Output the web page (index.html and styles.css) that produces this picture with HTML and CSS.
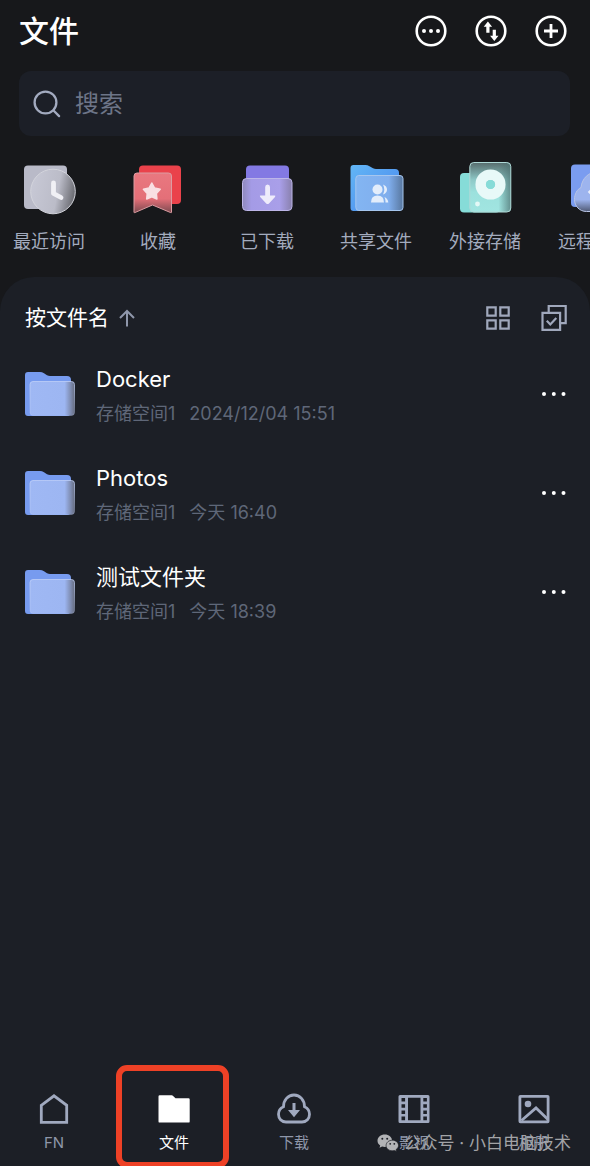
FILE: index.html
```html
<!DOCTYPE html>
<html lang="zh-CN">
<head>
<meta charset="utf-8">
<meta name="viewport" content="width=device-width, initial-scale=1">
<title>文件</title>
<link rel="stylesheet" href="styles.css">
</head>
<body>
<svg class="defs" width="0" height="0" aria-hidden="true">
  <defs>
    <linearGradient id="folder-front" x1="0" y1="0" x2="1" y2="0">
      <stop offset="0" stop-color="#9fb8f4"/><stop offset=".78" stop-color="#9db6f2"/><stop offset=".9" stop-color="#8291b8"/><stop offset="1" stop-color="#686f83"/>
    </linearGradient>
    <linearGradient id="folder-edge" x1="0" y1="0" x2="0" y2="1">
      <stop offset="0" stop-color="#c3d2f8" stop-opacity=".75"/><stop offset="1" stop-color="#c3d2f8" stop-opacity=".25"/>
    </linearGradient>
    <linearGradient id="clock-face" x1="0" y1=".4" x2="1" y2=".6">
      <stop offset="0" stop-color="#c7c8d5"/><stop offset=".6" stop-color="#bbbcc8"/><stop offset="1" stop-color="#66676d"/>
    </linearGradient>
    <linearGradient id="mark-face" x1="0" y1="0" x2="0" y2="1">
      <stop offset="0" stop-color="#e97880"/><stop offset=".65" stop-color="#e46f78"/><stop offset="1" stop-color="#7c4a50"/>
    </linearGradient>
    <linearGradient id="box-face" x1="0" y1="0" x2="1" y2="0">
      <stop offset="0" stop-color="#8f89bd"/><stop offset=".18" stop-color="#a49be6"/><stop offset=".75" stop-color="#a99fe9"/><stop offset="1" stop-color="#8980ad"/>
    </linearGradient>
    <linearGradient id="share-back" x1="0" y1="0" x2="1" y2="1">
      <stop offset="0" stop-color="#62b6f6"/><stop offset="1" stop-color="#4a86ec"/>
    </linearGradient>
    <linearGradient id="share-face" x1="0" y1="0" x2="1" y2="0">
      <stop offset="0" stop-color="#83b5f2"/><stop offset=".7" stop-color="#80aeed"/><stop offset="1" stop-color="#58779f"/>
    </linearGradient>
    <linearGradient id="disk-face" x1="0" y1="0" x2="0" y2="1">
      <stop offset="0" stop-color="#576c6d"/><stop offset=".35" stop-color="#8ec9c7"/><stop offset=".6" stop-color="#9ce1dd"/><stop offset="1" stop-color="#a1e5e1"/>
    </linearGradient>
    <linearGradient id="disk-shade" x1="0" y1="0" x2="1" y2="0">
      <stop offset=".7" stop-color="#4e7272" stop-opacity="0"/><stop offset="1" stop-color="#4e7272" stop-opacity=".75"/>
    </linearGradient>
    <linearGradient id="cloud-face" x1="0" y1="0" x2="0" y2="1">
      <stop offset=".7" stop-color="#9db4ee"/><stop offset="1" stop-color="#505a75"/>
    </linearGradient>
    <symbol id="folder" viewBox="0 0 50 44">
      <path d="M0 3q0-3 3-3h12q2 0 4 1.200l3 2q1.500.8 3 .8h17q4 0 4 4v32q0 4-4 4H3q-3 0-3-3z" fill="#779bef"/>
      <rect x="5" y="9.500" width="44.500" height="34" rx="3" fill="url(#folder-front)" stroke="url(#folder-edge)"/>
    </symbol>
    <symbol id="dots" viewBox="0 0 26 6">
      <g fill="#fff"><circle cx="3" cy="3" r="2"/><circle cx="12.800" cy="3" r="2"/><circle cx="22.500" cy="3" r="2"/></g>
    </symbol>
  </defs>
</svg>

<header class="topbar">
  <h1 class="topbar-title">文件</h1>
  <div class="topbar-actions">
    <button class="icon-button" type="button" aria-label="更多">
      <svg width="32" height="32" viewBox="0 0 32 32"><circle cx="16" cy="16" r="14.300" fill="none" stroke="#fff" stroke-width="2.600"/><g fill="#fff"><circle cx="9" cy="16" r="2"/><circle cx="16" cy="16" r="2"/><circle cx="23" cy="16" r="2"/></g></svg>
    </button>
    <button class="icon-button" type="button" aria-label="传输列表">
      <svg width="32" height="32" viewBox="0 0 32 32"><circle cx="16" cy="16" r="14.300" fill="none" stroke="#fff" stroke-width="2.600"/><path d="M12.900 6.500l4.200 5.300h-2.600v6h-3.200v-6H8.700zM19.300 26l-4.200-5.300h2.600v-6h3.200v6h2.600z" fill="#fff"/></svg>
    </button>
    <button class="icon-button" type="button" aria-label="新建">
      <svg width="32" height="32" viewBox="0 0 32 32"><circle cx="16" cy="16" r="14.300" fill="none" stroke="#fff" stroke-width="2.600"/><path d="M16 9v14M9 16h14" stroke="#fff" stroke-width="2.800"/></svg>
    </button>
  </div>
</header>

<form class="search" role="search">
  <label class="search-label" for="q" aria-label="搜索">
    <svg width="28" height="28" viewBox="0 0 28 28" fill="none" stroke="#a3abc0" stroke-width="2.300" stroke-linecap="round"><circle cx="12.500" cy="12.500" r="10.900"/><path d="M20.500 20.500l5.600 5.600"/></svg>
  </label>
  <input class="search-input" id="q" type="text" placeholder="搜索">
</form>

<nav class="shortcuts" aria-label="快捷入口">
  <a class="shortcut" href="#recent">
    <svg class="shortcut-icon" viewBox="0 0 60 60"><rect x="5" y="7.500" width="43" height="43.500" rx="4" fill="#b9bac8"/><circle cx="34" cy="33.500" r="22.300" fill="url(#clock-face)" stroke="#d3d4dc"/><path d="M34.500 25v10.500l7.500 4" fill="none" stroke="#f0f0f5" stroke-width="4.800" stroke-linecap="round" stroke-linejoin="round"/></svg>
    <span>最近访问</span>
  </a>
  <a class="shortcut" href="#favorites">
    <svg class="shortcut-icon" viewBox="0 0 60 60"><rect x="11" y="7.500" width="42" height="38.500" rx="4" fill="#ea424b"/><path d="M6 18q0-3 3-3h31.500q3 0 3 3v36.200q0 .8-.8.400L24.500 47 6.800 54.600q-.8.400-.8-.4z" fill="url(#mark-face)" stroke="#dc9ca2"/><path d="M23.800 25l2.800 5 5.600 1.200-3.800 4.300.5 5.500-5.100-2.200-5.100 2.200.5-5.500-3.800-4.300 5.600-1.200z" fill="#f9dfe3" stroke="#f9dfe3" stroke-width="1.500" stroke-linejoin="round"/></svg>
    <span>收藏</span>
  </a>
  <a class="shortcut" href="#downloaded">
    <svg class="shortcut-icon" viewBox="0 0 60 60"><rect x="9" y="7.500" width="43" height="30" rx="4" fill="#8379e3"/><rect x="5.500" y="20.500" width="49.500" height="32" rx="4" fill="url(#box-face)" stroke="#bdb6e8"/><path d="M28.200 29q0-2.500 2.400-2.500T33 29v8.500h4.500q1.500 0 .5 1.400l-6 6.500q-1.400 1.300-2.800 0l-6-6.500q-1-1.400.5-1.400h4.500z" fill="#eeebfb"/></svg>
    <span>已下载</span>
  </a>
  <a class="shortcut" href="#shared">
    <svg class="shortcut-icon" viewBox="0 0 60 60"><path d="M4.500 10q0-3 3-3h12q2 0 4 1.300l3.500 2q1.500.8 3 .8H49q4 0 4 4V49q0 4-4 4H7.500q-3 0-3-3z" fill="url(#share-back)"/><rect x="9.800" y="17.500" width="47.200" height="35" rx="3" fill="url(#share-face)" stroke="#a6c6ee"/><g fill="#e3edfb"><circle cx="31.500" cy="31.500" r="5"/><path d="M25 44.500q0-7 6.500-7t6.500 7z"/><path d="M37 26.500q4 1.500 4 5t-4 5q2.500-5 0-10zM38.500 39q3.500 1.500 3.800 5.500h-2.800q0-3-1-5.500z"/></g></svg>
    <span>共享文件</span>
  </a>
  <a class="shortcut" href="#external">
    <svg class="shortcut-icon" viewBox="0 0 60 60"><rect x="5" y="15" width="40" height="39.500" rx="4" fill="#86dcd8"/><rect x="14.800" y="4.500" width="41" height="49.500" rx="4" fill="url(#disk-face)"/><rect x="14.800" y="4.500" width="41" height="49.500" rx="4" fill="url(#disk-shade)" stroke="#afd9d7"/><circle cx="35.500" cy="26.500" r="9.800" fill="none" stroke="#e8f9f8" stroke-width="10.500"/><circle cx="35.500" cy="26.500" r="4.600" fill="#86dcd8"/><circle cx="22.500" cy="46" r="2.400" fill="#e3f8f6"/></svg>
    <span>外接存储</span>
  </a>
  <a class="shortcut" href="#remote">
    <svg class="shortcut-icon" viewBox="0 0 60 60"><rect x="7" y="6.500" width="43" height="42.500" rx="4" fill="#7a9cf0"/><path d="M22.500 53.500c-7 0-12-5.500-12-12 0-5.500 2.500-10 6.500-12C18 20 25 14 33 14s15 6 16 15.500c4 2 6.500 6.500 6.500 12 0 6.500-5 12-12 12z" fill="url(#cloud-face)" stroke="#b9c5e6"/><path d="M30 29.500l-4.500 4.500 4.500 4.500M36 29.500l4.500 4.500-4.500 4.500" fill="none" stroke="#e8eefc" stroke-width="2.500"/></svg>
    <span>远程挂载</span>
  </a>
</nav>

<main class="panel">
  <div class="toolbar">
    <button class="sort" type="button">
      <span>按文件名</span>
      <svg width="18" height="18" viewBox="0 0 18 18" fill="none" stroke="#8f97ab" stroke-width="2"><path d="M9 17.500V2M2 9l7-7 7 7"/></svg>
    </button>
    <div class="toolbar-actions">
      <button class="icon-button" type="button" aria-label="网格视图">
        <svg width="28" height="28" viewBox="0 0 28 28" fill="none" stroke="#a0a8bc" stroke-width="2.200"><path d="M3.300 3.300h8.400v8.400H3.300zM16.300 3.300h8.400v8.400h-8.400zM3.300 16.300h8.400v8.400H3.300zM16.300 16.300h8.400v8.400h-8.400z"/></svg>
      </button>
      <button class="icon-button" type="button" aria-label="多选">
        <svg width="28" height="28" viewBox="0 0 28 28" fill="none" stroke="#a0a8bc" stroke-width="2.200"><path d="M2.500 8.800h17.600v17H2.500zM8.700 8.500V2h17V19.200h-5.500M6.800 16.800l3.500 3.700 6-6.500"/></svg>
      </button>
    </div>
  </div>

  <ul class="files">
    <li class="file">
      <svg class="file-icon"><use href="#folder"/></svg>
      <div class="file-text">
        <h2 class="file-name">Docker</h2>
        <p class="file-meta"><span>存储空间1</span><span>2024/12/04 15:51</span></p>
      </div>
      <button class="icon-button" type="button" aria-label="Docker 更多操作"><svg class="dots"><use href="#dots"/></svg></button>
    </li>
    <li class="file">
      <svg class="file-icon"><use href="#folder"/></svg>
      <div class="file-text">
        <h2 class="file-name">Photos</h2>
        <p class="file-meta"><span>存储空间1</span><span>今天 16:40</span></p>
      </div>
      <button class="icon-button" type="button" aria-label="Photos 更多操作"><svg class="dots"><use href="#dots"/></svg></button>
    </li>
    <li class="file">
      <svg class="file-icon"><use href="#folder"/></svg>
      <div class="file-text">
        <h2 class="file-name">测试文件夹</h2>
        <p class="file-meta"><span>存储空间1</span><span>今天 18:39</span></p>
      </div>
      <button class="icon-button" type="button" aria-label="测试文件夹 更多操作"><svg class="dots"><use href="#dots"/></svg></button>
    </li>
  </ul>

  <nav class="tabs" aria-label="主导航">
    <a class="tab" href="#home">
      <svg class="tab-icon" viewBox="0 0 36 36" fill="none" stroke="#a0a9bf" stroke-width="2.800"><path d="M5.300 14.300L18 4.800l12.700 9.500v17H5.300z"/></svg>
      <span>FN</span>
    </a>
    <a class="tab tab-active" href="#files" aria-current="page">
      <svg class="tab-icon" viewBox="0 0 36 36" fill="#fff"><path d="M2.500 5.500q0-1.200 1.200-1.200h12q.8 0 1.400.6l2.400 2.300h13q1.200 0 1.200 1.200v22q0 1.200-1.200 1.200H3.700q-1.200 0-1.200-1.200z"/></svg>
      <span>文件</span>
    </a>
    <a class="tab" href="#downloads">
      <svg class="tab-icon" viewBox="0 0 36 36"><path d="M10 31C5.500 31 2.500 27.500 2.500 23.300c0-3.600 2-6.300 5-7.600C7.500 9 12 4 18 4s10.500 5 10.500 11.700c3 1.300 5 4 5 7.600 0 4.200-3 7.700-7.500 7.700z" fill="none" stroke="#a0a9bf" stroke-width="2.800"/><path d="M16.500 12h3v7H24l-6 7.300-6-7.300h4.500z" fill="#a0a9bf"/></svg>
      <span>下载</span>
    </a>
    <a class="tab" href="#videos">
      <svg class="tab-icon" viewBox="0 0 36 36"><path fill="#a0a9bf" fill-rule="evenodd" d="M4 4h28q1.500 0 1.500 1.500v25q0 1.500-1.500 1.500H4q-1.500 0-1.500-1.500v-25Q2.500 4 4 4zM12 6.800v22.400h12.500V6.800zM5.500 7v3.600h3.600V7zm0 6.200v3.600h3.600v-3.600zm0 6.200V23h3.600v-3.600zm0 6.200v3.600h3.600v-3.600zM27.300 7v3.600h3.600V7zm0 6.200v3.600h3.600v-3.600zm0 6.200V23h3.600v-3.600zm0 6.200v3.600h3.600v-3.600z"/></svg>
      <span>影视</span>
    </a>
    <a class="tab" href="#photos">
      <svg class="tab-icon" viewBox="0 0 36 36" fill="none" stroke="#a0a9bf" stroke-width="2.800"><rect x="3.900" y="5.300" width="28.200" height="25.500" rx=".5"/><path d="M5.500 29.500l14.500-12.500L32 28.500"/><circle cx="12" cy="13" r="3.300" fill="#a0a9bf" stroke="none"/></svg>
      <span>相册</span>
    </a>
  </nav>
</main>

<div class="watermark">
  <svg width="22" height="18" viewBox="0 0 22 18"><path d="M7.800.5C3.800.5.500 3.200.500 6.700c0 2 1 3.600 2.700 4.800l-.7 2.300 2.600-1.300c.9.300 1.800.4 2.700.4 4 0 7.300-2.700 7.300-6.200S11.800.5 7.800.5z" fill="#b2b3b6"/><path d="M15.300 6.200c-3.500 0-6.200 2.400-6.200 5.300s2.700 5.300 6.200 5.300c.8 0 1.500-.1 2.200-.3l2.100 1.100-.6-1.900c1.500-1 2.500-2.500 2.500-4.200 0-2.900-2.700-5.300-6.200-5.300z" fill="#b2b3b6" stroke="#1c1f26" stroke-width=".7"/><g fill="#1c1f26"><circle cx="5.300" cy="4.800" r="1"/><circle cx="10.200" cy="4.800" r="1"/><circle cx="13.200" cy="9.800" r=".9"/><circle cx="17.300" cy="9.800" r=".9"/></g></svg>
  <span>公众号 · 小白电脑技术</span>
</div>
</body>
</html>
```

FILE: styles.css
```css
* {
  box-sizing: border-box;
}

body {
  position: relative;
  display: flex;
  flex-direction: column;
  min-height: 100vh;
  margin: 0;
  overflow-x: hidden;
  background: #17181b;
  color: #fff;
  font-family: Inter, "Noto Sans CJK SC", sans-serif;
}

h1,
h2,
p,
ul {
  margin: 0;
  padding: 0;
}

svg {
  display: block;
  flex: none;
}

a {
  color: inherit;
  text-decoration: none;
}

.defs {
  position: absolute;
}

.icon-button,
.sort {
  padding: 0;
  border: 0;
  background: none;
  color: inherit;
  font: inherit;
  cursor: pointer;
}

/* Header */
.topbar {
  display: flex;
  align-items: center;
  justify-content: space-between;
  height: 61px;
  padding: 0 23px 0 19px;
}

.topbar-title {
  font-size: 30px;
  font-weight: 500;
  line-height: 40px;
}

.topbar-actions {
  display: flex;
  gap: 28px;
}

/* Search */
.search {
  display: flex;
  align-items: center;
  gap: 14px;
  height: 65px;
  margin: 10px 20px 0 19px;
  padding: 0 14px;
  border-radius: 12px;
  background: #1c1f27;
}

.search-input {
  flex: 1;
  min-width: 0;
  padding: 0;
  border: 0;
  outline: 0;
  background: none;
  color: #fff;
  font: inherit;
  font-size: 24px;
  line-height: 36px;
}

.search-input::placeholder {
  color: #6d7588;
  opacity: 1;
}

/* Shortcuts */
.shortcuts {
  display: flex;
  gap: 37px;
  padding: 22px 13px 23px;
  overflow: hidden;
}

.shortcut {
  display: flex;
  flex: 0 0 72px;
  flex-direction: column;
  align-items: center;
  gap: 12px;
  color: #a3abbe;
  font-size: 18px;
  line-height: 24px;
  white-space: nowrap;
}

.shortcut-icon {
  width: 60px;
  height: 60px;
}

/* File panel */
.panel {
  display: flex;
  flex: 1;
  flex-direction: column;
  border-radius: 34px 34px 0 0;
  background: #1c1f26;
}

.toolbar {
  display: flex;
  align-items: center;
  justify-content: space-between;
  padding: 25px 22px 10px 25px;
}

.sort {
  display: flex;
  align-items: center;
  gap: 9px;
  font-size: 21px;
  line-height: 32px;
}

.toolbar-actions {
  display: flex;
  gap: 28px;
}

.files {
  flex: 1;
  list-style: none;
}

.file {
  display: flex;
  align-items: center;
  height: 99px;
  padding: 0 23px 0 25px;
}

.file-icon {
  width: 50px;
  height: 44px;
}

.file-text {
  flex: 1;
  min-width: 0;
  padding: 2px 0 0 21px;
}

.file-name {
  font-size: 22px;
  font-weight: 400;
  line-height: 32px;
}

.file-meta {
  display: flex;
  gap: 14px;
  padding-top: 6px;
  color: #5f6778;
  font-size: 18px;
  line-height: 26px;
}

.dots {
  width: 26px;
  height: 6px;
}

/* Bottom tabs */
.tabs {
  display: grid;
  grid-template-columns: repeat(5, 1fr);
  margin: 0 -4px 0 -6px;
}

.tab {
  position: relative;
  display: flex;
  flex-direction: column;
  align-items: center;
  gap: 5px;
  padding: 26px 0 12px;
  color: #8e96a9;
  font-size: 15px;
  line-height: 22px;
}

.tab-icon {
  width: 36px;
  height: 36px;
}

.tab-active {
  color: #fff;
}

.tab-active::after {
  content: "";
  position: absolute;
  inset: 0 5px -2px 2px;
  border: 6px solid #ee4126;
  border-radius: 11px;
}

/* Watermark */
.watermark {
  position: absolute;
  right: 19px;
  bottom: 11px;
  display: flex;
  align-items: center;
  gap: 5px;
  color: #a2a3a6;
  font-size: 17px;
  line-height: 24px;
  white-space: nowrap;
  pointer-events: none;
}
```
